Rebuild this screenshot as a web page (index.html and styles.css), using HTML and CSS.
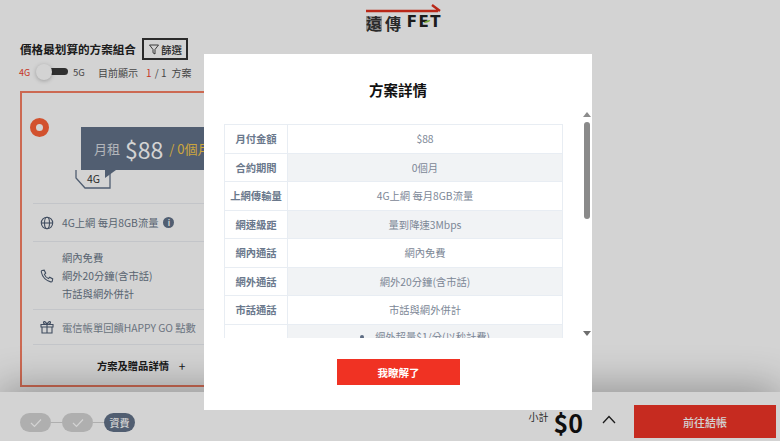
FILE: index.html
```html
<!DOCTYPE html>
<html lang="zh-Hant">
<head>
<meta charset="utf-8">
<title>方案詳情</title>
<link rel="stylesheet" href="styles.css">
</head>
<body>
<div class="page">
  <header class="top">
    <div class="logo">
      <svg class="logo-arrow" width="76" height="10" viewBox="0 0 76 10"><path d="M0 7h72M66 1l8 6" fill="none" stroke="#e0301e" stroke-width="2.4"/></svg>
      <div class="logo-text"><span class="logo-cn"><span class="logo-box">遠</span><span>傳</span></span><span class="logo-en">FET</span></div>
      <svg class="leaf" width="8" height="3" viewBox="0 0 9 4"><path d="M0 4C2 1 5 0 9 0 8 3 4 4 0 4z" fill="#8fc640"/></svg>
    </div>
  </header>
  <main class="main">
    <div class="title-row">
      <h1 class="page-title">價格最划算的方案組合</h1>
      <button class="filter">
        <svg width="10" height="11" viewBox="0 0 10 11"><path d="M.5 1h9L6 5.500V10L4 8.800V5.500Z" fill="none" stroke="#333" stroke-width=".9"/></svg>
        <span>篩選</span>
      </button>
    </div>
    <div class="switch-row">
      <span class="g4">4G</span>
      <span class="toggle"><span class="track"></span><span class="knob"></span></span>
      <span class="g5">5G</span>
      <span class="shown">目前顯示</span>
      <span class="count"><b>1</b> / 1</span>
      <span class="shown">方案</span>
    </div>
    <section class="card">
      <div class="card-top">
        <span class="radio"></span>
        <div class="price">
          <div class="tag"><span class="tag-l">月租</span><span class="tag-p">$88</span><span class="tag-y">/ 0個月</span></div>
          <div class="sim">
            <svg class="sim-shape" width="42" height="23" viewBox="0 0 42 23"><path d="M1 3v8l9 10h25V3" fill="#fff" stroke="#627289" stroke-width="1.3"/><path d="M30 3v8l11-8z" fill="#627289"/></svg>
            <span class="sim-text">4G</span>
          </div>
        </div>
      </div>
      <div class="line row-net">
        <svg class="ico" width="14" height="14" viewBox="0 0 14 14" fill="none" stroke="#4f5e75" stroke-width="1.1"><circle cx="7" cy="7" r="5.700"/><ellipse cx="7" cy="7" rx="2.500" ry="5.700"/><path d="M1.300 7h11.400"/></svg>
        <span class="t">4G上網 每月8GB流量</span>
        <span class="info">i</span>
      </div>
      <div class="line row-call">
        <svg class="ico" width="14" height="14" viewBox="0 0 14 14" fill="none" stroke="#4f5e75" stroke-width="1.1"><path d="M2 1.500l2.200-.3 1.500 3-1.300 1.200c.7 1.900 2 3.300 4 4.200l1.300-1.300 3 1.600-.4 2.200c-.2.6-.9.9-1.600.8C6 11.500 2.300 7.700 1.300 3c-.1-.7.100-1.300.7-1.500z"/></svg>
        <div class="t stack"><div>網內免費</div><div>網外20分鐘(含市話)</div><div>市話與網外併計</div></div>
      </div>
      <div class="line row-gift">
        <svg class="ico" width="14" height="14" viewBox="0 0 14 14" fill="none" stroke="#4f5e75" stroke-width="1.1"><path d="M1 4.500h12v2.500H1zM2 7v6h10V7M7 4.500V13M7 4.500C5 4.500 3.500 3.800 3.500 2.500S5.500.8 7 4.500zM7 4.500c2 0 3.500-.7 3.500-2S8.500.8 7 4.500z"/></svg>
        <span class="t gift">電信帳單回饋HAPPY GO 點數</span>
      </div>
      <div class="more"><b>方案及贈品詳情</b><span class="plus">+</span></div>
    </section>
  </main>
  <footer class="bar">
    <div class="steps">
      <span class="step done"><svg width="12" height="10" viewBox="0 0 12 10"><path d="M1 5l3.500 3.500L11 1.500" fill="none" stroke="#fff" stroke-width="1.2"/></svg></span>
      <span class="link"></span>
      <span class="step done"><svg width="12" height="10" viewBox="0 0 12 10"><path d="M1 5l3.500 3.500L11 1.500" fill="none" stroke="#fff" stroke-width="1.2"/></svg></span>
      <span class="link"></span>
      <span class="step now">資費</span>
    </div>
    <div class="sum"><span class="sum-l">小計</span><span class="sum-v">$0</span></div>
    <svg class="chev" width="14" height="9" viewBox="0 0 14 9"><path d="M1 8l6-6.500L13 8" fill="none" stroke="#222" stroke-width="1.3"/></svg>
    <button class="go">前往結帳</button>
  </footer>
</div>
<div class="overlay">
  <div class="modal">
    <h2 class="modal-title">方案詳情</h2>
    <div class="scroll-wrap">
      <div class="clip">
        <table class="spec">
          <tr><th>月付金額</th><td>$88</td></tr>
          <tr><th>合約期間</th><td>0個月</td></tr>
          <tr><th>上網傳輸量</th><td>4G上網 每月8GB流量</td></tr>
          <tr><th>網速級距</th><td>量到降速3Mbps</td></tr>
          <tr><th>網內通話</th><td>網內免費</td></tr>
          <tr><th>網外通話</th><td>網外20分鐘(含市話)</td></tr>
          <tr><th>市話通話</th><td>市話與網外併計</td></tr>
          <tr><th></th><td class="notes-cell"><ul class="notes"><li>網外超量$1/分(以秒計費)</li></ul></td></tr>
        </table>
      </div>
      <div class="sb">
        <span class="arr up"></span>
        <span class="thumb"></span>
        <span class="arr down"></span>
      </div>
    </div>
    <div class="modal-foot"><button class="ok">我瞭解了</button></div>
  </div>
</div>
</body>
</html>
```
FILE: styles.css
```css
* { box-sizing: border-box; }
html, body { margin: 0; height: 100%; overflow: hidden; }
body { font-family: "Noto Sans CJK TC", "Noto Sans", sans-serif; background: #fff; color: #333; }
button { font-family: inherit; cursor: pointer; }

.page { width: 780px; height: 441px; display: flex; flex-direction: column; overflow: hidden; }

.top { height: 38px; flex: none; display: flex; justify-content: center; padding: 4px 0 0 28px; }
.logo { position: relative; width: 76px; display: flex; flex-direction: column; }
.logo-arrow { display: block; }
.logo-text { display: flex; align-items: center; height: 15px; margin-top: 1px; }
.logo-cn { display: flex; gap: 3px; width: 41px; height: 14px; font-size: 16px; line-height: 14px; font-weight: 700; color: #333; white-space: nowrap; }
.logo-box { display: block; height: 14px; background: #b4b4b4; }
.logo-en { font-family: "DejaVu Sans", sans-serif; font-size: 15px; line-height: 15px; font-weight: 700; color: #222; letter-spacing: 1.5px; }
.leaf { position: absolute; left: 57px; top: 16px; }

.main { flex: 1; padding: 0 20px; min-height: 0; }
.title-row { display: flex; align-items: center; height: 22px; gap: 6px; }
.page-title { margin: 0; font-size: 11.6px; font-weight: 700; color: #222; line-height: 22px; }
.filter { height: 22px; width: 46px; padding: 0 0 0 5px; display: flex; align-items: center; gap: 2px; background: #fff; border: 2px solid #333; font-size: 10.5px; font-weight: 500; color: #333; white-space: nowrap; }
.filter svg { flex: none; }

.switch-row { display: flex; align-items: center; height: 16px; margin-top: 4px; font-size: 10px; color: #555; }
.g4 { width: 12px; margin-left: -1px; font-size: 9px; color: #f0432c; }
.toggle { position: relative; width: 32px; height: 16px; margin-left: 5px; }
.track { position: absolute; left: 14px; top: 4px; width: 18px; height: 7px; border-radius: 2px 4px 4px 2px; background: #3b3b3b; }
.knob { position: absolute; left: 0; top: 0; width: 16px; height: 16px; border-radius: 50%; background: #fff; box-shadow: 0 1px 4px rgba(0,0,0,.25); }
.g5 { width: 25px; font-size: 9.5px; margin-left: 5px; }
.shown { font-size: 10px; }
.count { margin: 0 5px 0 8px; font-size: 10px; }
.count b { font-weight: 400; color: #f0432c; margin-right: 1px; }

.card { position: relative; width: 400px; height: 296px; margin-top: 11px; padding: 0 0 0 11px; border: 2px solid #f77f64; }
.card-top { height: 111px; position: relative; border-bottom: 1px solid #eceff3; }
.radio { position: absolute; left: -3px; top: 25px; width: 19px; height: 19px; border: 6px solid #fe6338; border-radius: 50%; background: #fff; }
.price { position: absolute; left: 48px; top: 34px; }
.tag { width: 300px; height: 43px; background: #627289; display: flex; align-items: center; padding-left: 13px; color: #fff; }
.tag-l { font-size: 13px; opacity: .75; }
.tag-p { font-size: 23px; margin-left: 5px; }
.tag-y { font-size: 13px; margin-left: 6px; color: #f6c94a; }
.sim { position: absolute; left: -6px; top: 40px; width: 42px; height: 23px; }
.sim-shape { display: block; }
.sim-text { position: absolute; left: 12px; top: 5px; font-size: 10.5px; line-height: 14px; color: #333; }

.line { display: flex; align-items: center; gap: 8px; border-bottom: 1px solid #eceff3; padding-left: 7px; font-size: 10.3px; color: #6b7889; }
.ico { flex: none; }
.row-net { height: 38px; }
.row-call { height: 68px; }
.row-gift { height: 35px; }
.stack div { height: 18px; line-height: 18px; }
.gift { opacity: .85; }
.info { width: 11px; height: 11px; margin-left: -3px; border-radius: 50%; background: #627289; color: #fff; font-size: 8px; line-height: 11px; text-align: center; font-weight: 700; }
.more { width: 162px; height: 41px; display: flex; align-items: center; justify-content: flex-end; font-size: 10.3px; color: #222; }
.more b { font-weight: 700; }
.plus { width: 26px; text-align: center; font-size: 12px; }

.bar { position: relative; height: 49px; flex: none; display: flex; align-items: center; padding: 0 4px 0 20px; background: #fff; box-shadow: 0 -4px 40px rgba(0,0,0,.32); }
.steps { display: flex; align-items: center; margin-top: 12px; }
.step { width: 31px; height: 19px; border-radius: 10px; display: flex; align-items: center; justify-content: center; }
.done { background: #d4d4d4; }
.now { background: #627289; color: #fff; font-size: 10px; font-weight: 500; }
.link { width: 11px; height: 1px; background: #d4d4d4; }
.sum { margin-left: auto; display: flex; align-items: flex-start; margin-top: 11px; }
.sum-l { font-size: 10px; line-height: 12px; margin-top: 4px; color: #333; }
.sum-v { font-size: 25px; line-height: 30px; font-weight: 700; margin-left: 5px; color: #111; }
.chev { margin: 6px 18px 0 19px; }
.go { width: 142px; height: 33px; margin-top: 10px; border: 0; background: #f03427; color: #fff; font-size: 11px; font-weight: 500; }

.overlay { position: fixed; inset: 0; background: rgba(0,0,0,.173); display: flex; justify-content: center; padding: 54px 0 0 16px; }
.modal { width: 388px; height: 356px; background: #fff; padding: 0 0 0 20px; display: flex; flex-direction: column; }
.modal-title { margin: 24px 0 0 -20px; height: 24px; line-height: 24px; text-align: center; font-size: 14.5px; font-weight: 700; color: #111; }
.scroll-wrap { display: flex; margin-top: 22px; height: 218px; position: relative; }
.clip { width: 339px; height: 214px; overflow: hidden; }
.spec { width: 339px; table-layout: fixed; border-collapse: collapse; font-size: 10.3px; }
.spec th, .spec td { height: 28.5px; padding: 0; border: 1px solid #e8edf3; text-align: center; vertical-align: middle; }
.spec th { width: 63px; font-weight: 700; color: #6a788c; }
.spec td { color: #7c8796; font-weight: 400; }
.spec tr:nth-child(even) td { background: #f1f3f5; }
.spec .notes-cell { vertical-align: top; padding-top: 4px; text-align: left; }
.notes { margin: 0 0 0 73px; padding: 0 0 0 14px; color: #7c8796; }
.notes li::marker { color: #5e6d83; }
.sb { width: 8px; margin-left: 20px; margin-top: -12px; height: 224px; display: flex; flex-direction: column; align-items: center; gap: 5px; flex: none; }
.arr { width: 0; height: 0; border-left: 4px solid transparent; border-right: 4px solid transparent; flex: none; }
.up { border-bottom: 5px solid #8c8c8c; }
.down { border-top: 5px solid #6e6e6e; margin-top: auto; }
.thumb { width: 6px; height: 97px; border-radius: 3px; background: #8a8a8a; }
.modal-foot { display: flex; padding-left: 113px; margin-top: 17px; }
.ok { width: 123px; height: 26px; border: 0; background: #f03223; color: #fff; font-size: 10.5px; font-weight: 700; }
```
